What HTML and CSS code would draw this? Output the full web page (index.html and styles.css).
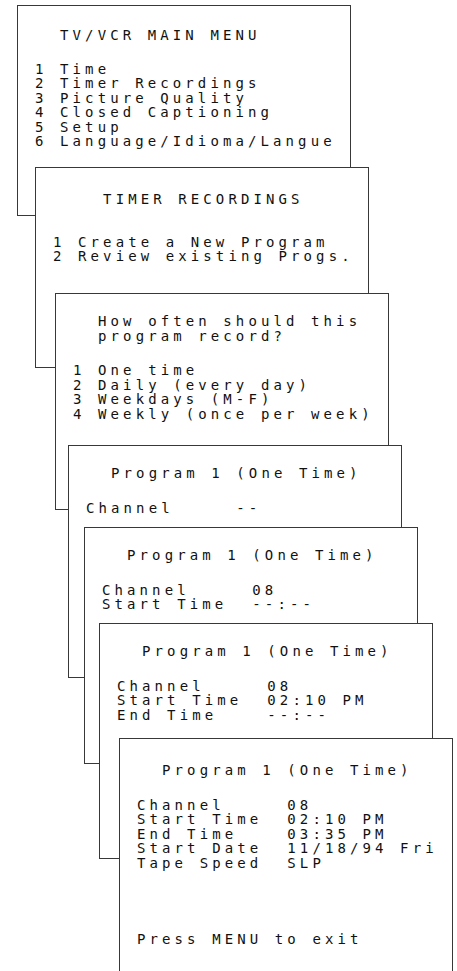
FILE: index.html
```html
<!DOCTYPE html>
<html lang="en">
<head>
    <meta charset="utf-8">
    <title>TV/VCR Menu Screens</title>
    <link rel="stylesheet" href="styles.css">
</head>
<body>
<div class="stack">

    <div class="screen screen-1">
        <div class="title">  TV/VCR MAIN MENU</div>
        <div class="lines">
            <div>1 Time</div>
            <div>2 Timer Recordings</div>
            <div>3 Picture Quality</div>
            <div>4 Closed Captioning</div>
            <div>5 Setup</div>
            <div>6 Language/Idioma/Langue</div>
        </div>
    </div>

    <div class="screen screen-2">
        <div class="title">    TIMER RECORDINGS</div>
        <div class="lines lines-wide">
            <div>1 Create a New Program</div>
            <div>2 Review existing Progs.</div>
        </div>
    </div>

    <div class="screen screen-3">
        <div class="title">  How often should this</div>
        <div class="title">  program record?</div>
        <div class="lines">
            <div>1 One time</div>
            <div>2 Daily (every day)</div>
            <div>3 Weekdays (M-F)</div>
            <div>4 Weekly (once per week)</div>
        </div>
    </div>

    <div class="screen screen-4">
        <div class="title">  Program 1 (One Time)</div>
        <div class="lines">
            <div>Channel     --</div>
        </div>
    </div>

    <div class="screen screen-5">
        <div class="title">  Program 1 (One Time)</div>
        <div class="lines">
            <div>Channel     08</div>
            <div>Start Time  --:--</div>
        </div>
    </div>

    <div class="screen screen-6">
        <div class="title">  Program 1 (One Time)</div>
        <div class="lines">
            <div>Channel     08</div>
            <div>Start Time  02:10 PM</div>
            <div>End Time    --:--</div>
        </div>
    </div>

    <div class="screen screen-7">
        <div class="title">  Program 1 (One Time)</div>
        <div class="lines">
            <div>Channel     08</div>
            <div>Start Time  02:10 PM</div>
            <div>End Time    03:35 PM</div>
            <div>Start Date  11/18/94 Fri</div>
            <div>Tape Speed  SLP</div>
        </div>
        <div class="footer">Press MENU to exit</div>
    </div>

</div>
</body>
</html>
```

FILE: styles.css
```css
html, body {
    margin: 0;
    padding: 0;
    background: #FFFFFF;
    overflow: hidden;
}

.stack {
    position: relative;
    width: 457px;
    height: 971px;
}

/* one on-screen menu, drawn as a window on the canvas */
.screen {
    position: absolute;
    box-sizing: border-box;
    width: 334px;
    padding: 20px 0 0 17px;
    border: 1px solid #383838;
    background: #FFFFFF;
    color: #111111;
    font-family: "DejaVu Sans Mono", "Liberation Mono", monospace;
    font-size: 14px;
    letter-spacing: 4.1px;
    line-height: 14.5px;
}

.title,
.lines > div,
.footer {
    white-space: pre;
}

.lines {
    margin-top: 20px;
}

.lines-wide {
    margin-top: 28px;
}

.footer {
    margin-top: 62px;
}

.screen-1 { left: 17px;  top: 5px;   height: 211px; padding-top: 22px; }
.screen-1 .lines { margin-top: 19px; }
.screen-2 { left: 35px;  top: 167px; height: 201px; padding-top: 24px; }
.screen-3 { left: 55px;  top: 293px; height: 217px; }
.screen-4 { left: 68px;  top: 445px; height: 233px; }
.screen-5 { left: 84px;  top: 527px; height: 237px; }
.screen-6 { left: 99px;  top: 623px; height: 236px; }
.screen-7 { left: 119px; top: 738px; height: 240px; padding-top: 24px; }
```
